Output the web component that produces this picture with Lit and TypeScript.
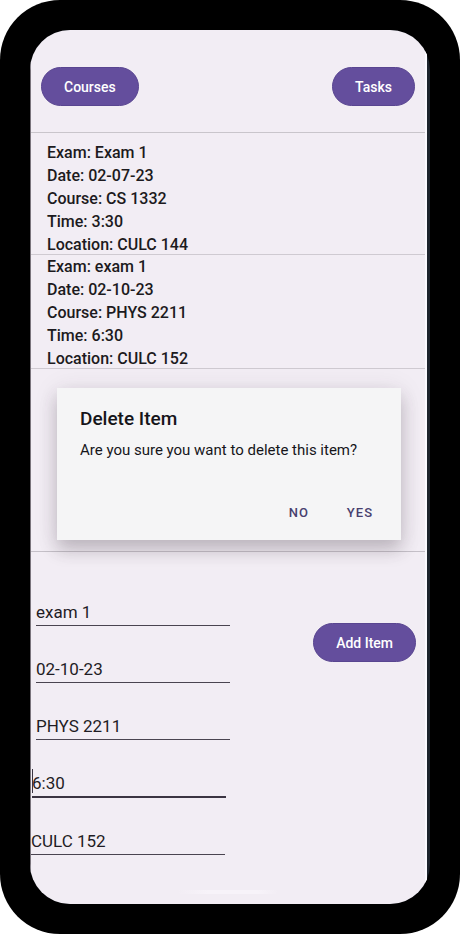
import { LitElement, html, css } from "lit";
import { customElement, property, state } from "lit/decorators.js";
import { classMap } from "lit/directives/class-map.js";

interface Exam {
  name: string;
  date: string;
  course: string;
  time: string;
  location: string;
}

interface Field {
  id: string;
  label: string;
  value: string;
  align?: "near" | "edge";
  active?: boolean;
}

const EXAMS: Exam[] = [
  { name: "Exam 1", date: "02-07-23", course: "CS 1332", time: "3:30", location: "CULC 144" },
  { name: "exam 1", date: "02-10-23", course: "PHYS 2211", time: "6:30", location: "CULC 152" },
];

const FIELDS: Field[] = [
  { id: "name", label: "Exam", value: "exam 1" },
  { id: "date", label: "Date", value: "02-10-23" },
  { id: "course", label: "Course", value: "PHYS 2211" },
  { id: "time", label: "Time", value: "6:30", align: "near", active: true },
  { id: "location", label: "Location", value: "CULC 152", align: "edge" },
];

@customElement("pill-button")
export class PillButton extends LitElement {
  @property() label = "";

  static styles = css`
    :host {
      display: block;
    }
    .pill {
      display: block;
      height: 39px;
      padding: 0 22px;
      border: 1px solid #594590;
      border-radius: 20px;
      background: #644e9d;
      color: #fff;
      font: 500 14px/20px Roboto, sans-serif;
      cursor: pointer;
    }
  `;

  render() {
    return html`<button class="pill" type="button">${this.label}</button>`;
  }
}

@customElement("confirm-dialog")
export class ConfirmDialog extends LitElement {
  static styles = css`
    :host {
      display: block;
    }
    .card {
      display: flex;
      flex-direction: column;
      box-sizing: border-box;
      min-height: 152px;
      padding: 19px 20px 15px 23px;
      background: #f5f5f6;
      box-shadow: 0 10px 16px rgba(60, 45, 60, 0.24), 0 2px 24px rgba(60, 45, 60, 0.1);
      color: #16151a;
    }
    .title {
      margin: 0;
      font: 500 19px/24px Roboto, sans-serif;
    }
    .message {
      margin: 8px 0 0;
      font: 400 15px/22px Roboto, sans-serif;
    }
    .actions {
      display: flex;
      justify-content: flex-end;
      gap: 22px;
      margin-top: auto;
    }
    .action {
      padding: 4px 8px;
      border: 0;
      background: none;
      color: #48406e;
      font: 500 13px/16px Roboto, sans-serif;
      letter-spacing: 1px;
      cursor: pointer;
    }
  `;

  private answer(value: boolean) {
    this.dispatchEvent(new CustomEvent("answer", { detail: value }));
  }

  render() {
    return html`
      <div class="card" role="alertdialog" aria-labelledby="title" aria-describedby="message">
        <h2 class="title" id="title">Delete Item</h2>
        <p class="message" id="message">Are you sure you want to delete this item?</p>
        <div class="actions">
          <button class="action" type="button" @click=${() => this.answer(false)}>NO</button>
          <button class="action" type="button" @click=${() => this.answer(true)}>YES</button>
        </div>
      </div>
    `;
  }
}

@customElement("app-root")
export class AppRoot extends LitElement {
  @state() private exams = EXAMS;
  @state() private confirming = true;

  static styles = css`
    :host {
      display: block;
      background: #fff;
      color: #1c1a20;
      font-family: Roboto, sans-serif;
    }
    .device {
      display: flex;
      box-sizing: border-box;
      min-height: 100vh;
      padding: 30px;
      border-radius: 60px;
      background: #000;
    }
    .screen {
      display: flex;
      flex: 1;
      min-width: 0;
      padding-right: 3px;
      border-radius: 40px;
      overflow: hidden;
      background: #1d242d;
    }
    .page {
      position: relative;
      display: flex;
      flex: 1;
      flex-direction: column;
      min-width: 0;
      border-right: 2px solid #fbfaff;
      border-left: 1px solid #7a747c;
      background: #f2edf4;
    }
    .bar {
      display: flex;
      justify-content: space-between;
      padding: 37px 10px 26px;
      border-bottom: 1px solid #c9c5cb;
    }
    .exams {
      position: relative;
      flex: 1;
      border-bottom: 1px solid #c5c0c8;
    }
    .list {
      margin: 0;
      padding: 8px 0 0;
      list-style: none;
    }
    .exam {
      box-sizing: border-box;
      height: 114px;
      padding-left: 16px;
      border-bottom: 1px solid #cfcad1;
      font-size: 16px;
      font-weight: 500;
      line-height: 23px;
    }
    .line {
      display: block;
    }
    .confirm {
      position: absolute;
      right: 24px;
      bottom: 11px;
      left: 26px;
      z-index: 1;
    }
    .editor {
      display: flex;
      align-items: flex-start;
      justify-content: space-between;
      padding: 46px 9px 49px 0;
    }
    .fields {
      display: flex;
      flex-direction: column;
      gap: 29px;
      width: 50%;
    }
    .field {
      position: relative;
      width: 194px;
      margin-left: 5px;
    }
    .field.near {
      margin-left: 1px;
    }
    .field.edge {
      margin-left: 0;
    }
    .input {
      display: block;
      box-sizing: border-box;
      width: 100%;
      height: 28px;
      padding: 0;
      border: 0;
      border-bottom: 1px solid #4a4450;
      border-radius: 0;
      outline: none;
      background: none;
      color: #1f1c24;
      font: 400 17px/24px Roboto, sans-serif;
    }
    .active .input {
      height: 29px;
      border-bottom: 2px solid #3b3442;
    }
    .active::before {
      content: "";
      position: absolute;
      top: 0;
      left: 0;
      width: 1px;
      height: 24px;
      background: #3b3442;
    }
    .add {
      margin-top: 25px;
    }
    .handle {
      position: absolute;
      bottom: 10px;
      left: 50%;
      width: 100px;
      height: 4px;
      margin-left: -50px;
      border-radius: 2px;
      background: linear-gradient(90deg, #f2edf4, #f7f3f9 30%, #f7f3f9 80%, #f2edf4);
    }
  `;

  private onAnswer(event: CustomEvent<boolean>) {
    if (event.detail) this.exams = this.exams.slice(0, -1);
    this.confirming = false;
  }

  private renderExam(exam: Exam) {
    return html`
      <li class="exam">
        <span class="line">Exam: ${exam.name}</span>
        <span class="line">Date: ${exam.date}</span>
        <span class="line">Course: ${exam.course}</span>
        <span class="line">Time: ${exam.time}</span>
        <span class="line">Location: ${exam.location}</span>
      </li>
    `;
  }

  private renderField(field: Field) {
    const classes = {
      field: true,
      near: field.align === "near",
      edge: field.align === "edge",
      active: !!field.active,
    };
    return html`
      <div class=${classMap(classes)}>
        <input class="input" type="text" id=${field.id} aria-label=${field.label} .value=${field.value} />
      </div>
    `;
  }

  render() {
    return html`
      <div class="device">
        <div class="screen">
          <main class="page">
            <nav class="bar">
              <pill-button label="Courses"></pill-button>
              <pill-button label="Tasks"></pill-button>
            </nav>
            <section class="exams">
              <ul class="list">
                ${this.exams.map((exam) => this.renderExam(exam))}
              </ul>
              ${this.confirming
                ? html`<confirm-dialog class="confirm" @answer=${this.onAnswer}></confirm-dialog>`
                : null}
            </section>
            <form class="editor">
              <div class="fields">${FIELDS.map((field) => this.renderField(field))}</div>
              <pill-button class="add" label="Add Item"></pill-button>
            </form>
            <div class="handle"></div>
          </main>
        </div>
      </div>
    `;
  }
}
